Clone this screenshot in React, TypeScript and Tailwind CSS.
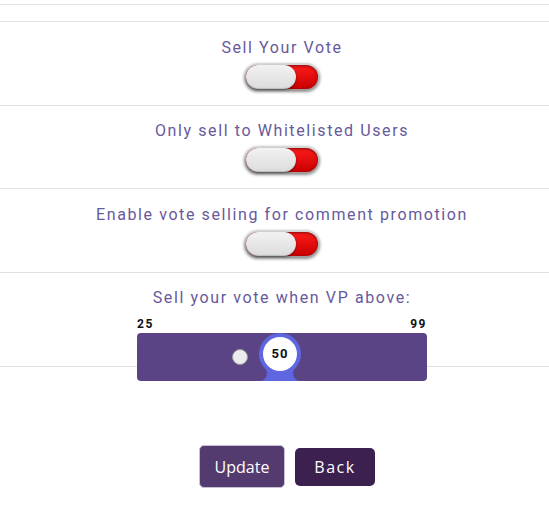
import { useState } from 'react'

function Toggle({ on }: { on: boolean }) {
  return (
    <div className="w-[76px] h-[28px] rounded-full p-[2px] bg-gradient-to-b from-[#d8d8d8] to-[#9a9a9a] shadow-[0_1px_3px_rgba(0,0,0,0.45)]">
      <div className="relative w-full h-full rounded-full bg-gradient-to-b from-[#ff1a1a] to-[#c80000] shadow-[inset_0_1px_3px_rgba(0,0,0,0.5)]">
        <div
          className={`absolute top-0 h-[24px] w-[50px] rounded-full bg-gradient-to-b from-[#f2f2f2] to-[#dcdcdc] shadow-[0_1px_2px_rgba(0,0,0,0.5),inset_0_-1px_1px_rgba(0,0,0,0.15)] ${on ? 'right-0' : 'left-0'}`}
        />
      </div>
    </div>
  )
}

const rows = [
  { label: 'Sell Your Vote', h: 'h-[84px]', pt: 'pt-[15px]' },
  { label: 'Only sell to Whitelisted Users', h: 'h-[83px]', pt: 'pt-[14px]' },
  { label: 'Enable vote selling for comment promotion', h: 'h-[84px]', pt: 'pt-[15px]' },
]

export default function App() {
  const [value] = useState(50)

  return (
    <div className="min-h-[523px] bg-white font-['Roboto',sans-serif]">
      <div className="h-[5px] border-b border-[#e2e2e2]" />
      <div className="h-[17px] border-b border-[#e2e2e2]" />

      {rows.map(r => (
        <div key={r.label} className={`${r.h} ${r.pt} border-b border-[#e2e2e2] pl-[15px] flex flex-col items-center`}>
          <p className="text-[16px] leading-[22px] tracking-[1.6px] text-[#67599c]">{r.label}</p>
          <div className="mt-[4px]">
            <Toggle on={false} />
          </div>
        </div>
      ))}

      <div className="h-[94px] pt-[14px] border-b border-[#e2e2e2] pl-[15px] flex flex-col items-center">
        <p className="text-[16px] leading-[22px] tracking-[1.6px] text-[#67599c]">Sell your vote when VP above:</p>
        <div className="w-[290px] mt-[8px]">
          <div className="flex justify-between text-[12px] leading-[14px] font-bold tracking-[1.5px] text-[#111]">
            <span>25</span>
            <span>99</span>
          </div>
          <div className="relative mt-[2px] h-[48px] rounded-[4px] bg-[#5a4486]">
            <div className="absolute left-[95px] top-[16px] w-[16px] h-[16px] rounded-full bg-[#ececec] border border-[#9a9a9a]" />
            <svg className="absolute left-[122px] top-0" width="42" height="48" viewBox="0 0 42 48">
              <circle cx="21" cy="21" r="21" fill="#5f67e0" />
              <path d="M7 36 Q10 44 3 48 L39 48 Q32 44 35 36 Z" fill="#5f67e0" />
            </svg>
            <div className="absolute left-[126px] top-[4px] w-[34px] h-[34px] rounded-full bg-white flex items-center justify-center text-[13px] font-bold tracking-[1px] text-[#111]">
              {value}
            </div>
          </div>
        </div>
      </div>

      <div className="mt-[78px] flex items-center justify-center gap-[10px] pl-[25px] font-['Open_Sans',sans-serif]">
        <button className="w-[86px] h-[43px] rounded-[5px] bg-[#533a6f] border border-[#c8c0d4] text-white text-[16px]">
          Update
        </button>
        <button className="w-[80px] h-[38px] rounded-[5px] bg-[#3b2050] text-white text-[16px] tracking-[1.5px]">
          Back
        </button>
      </div>
    </div>
  )
}
